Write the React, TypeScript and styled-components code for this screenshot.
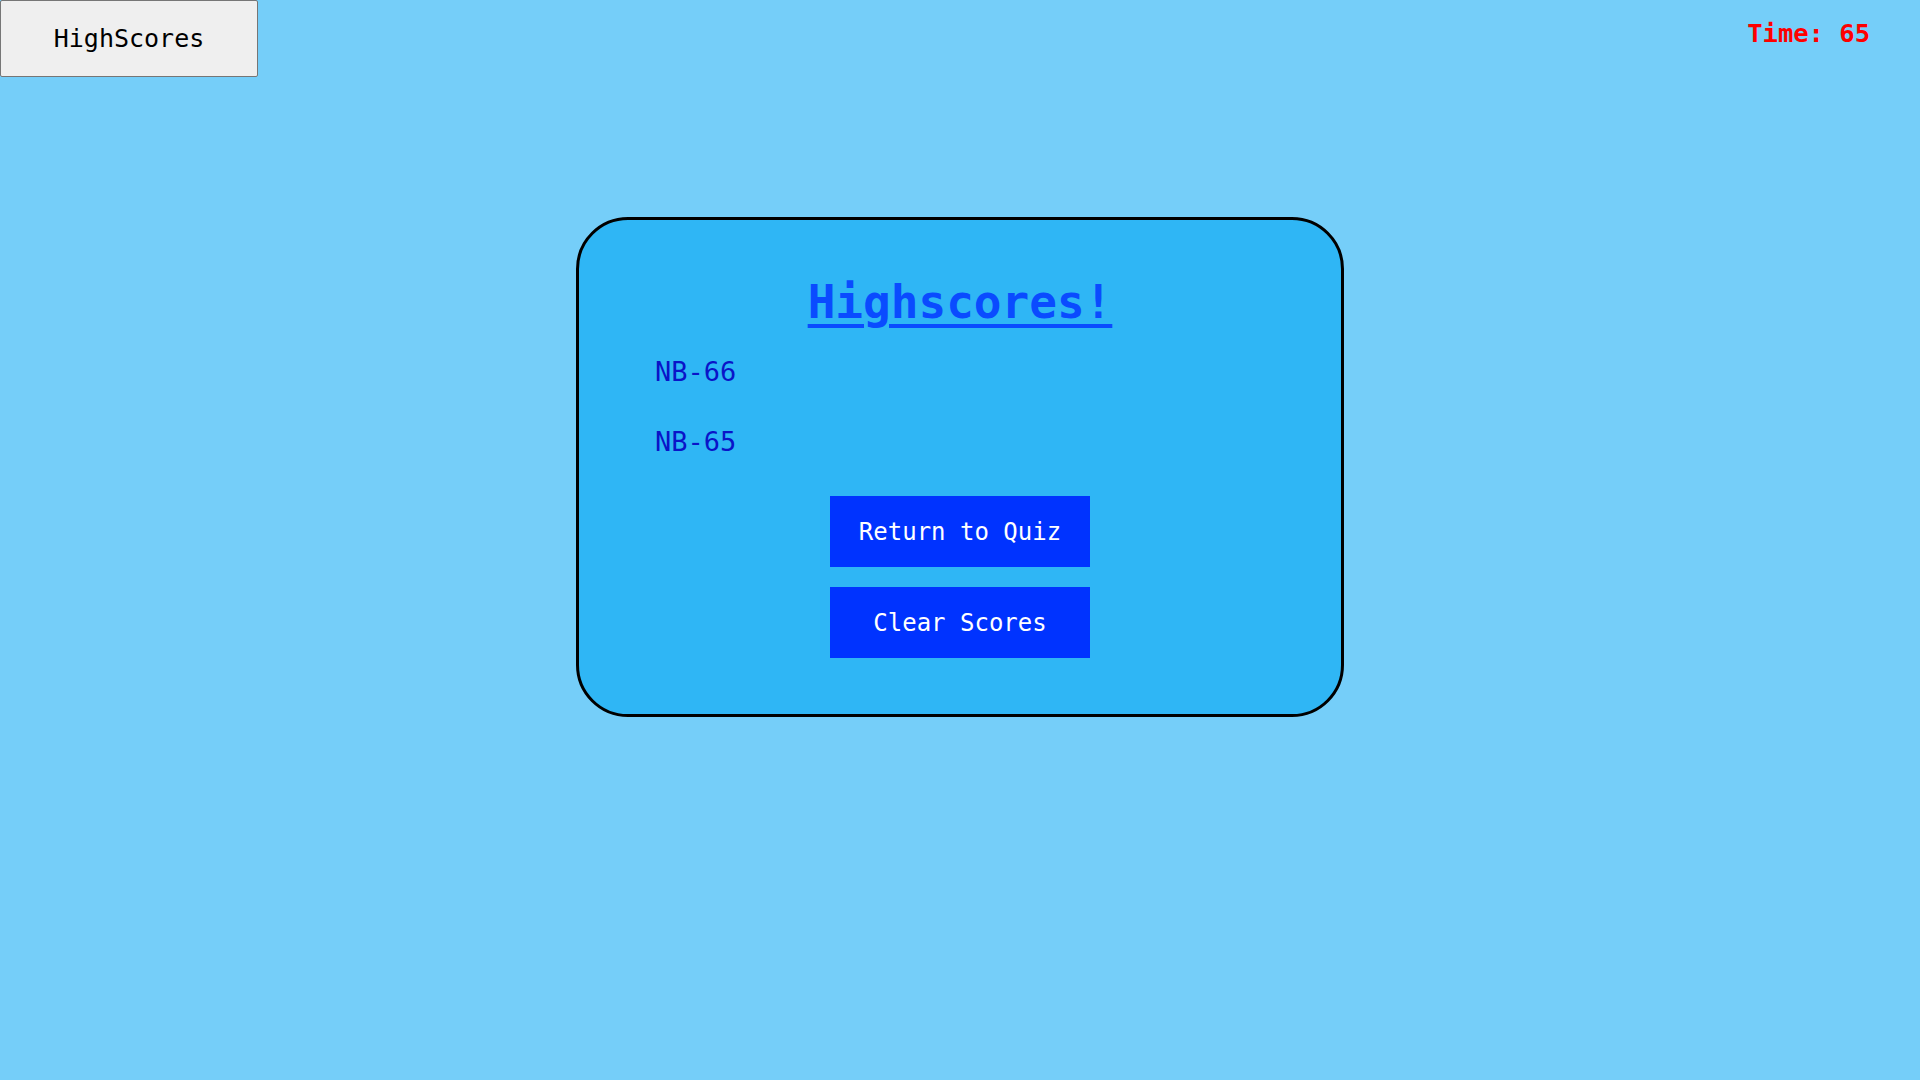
import React from "react";
import styled, { createGlobalStyle } from "styled-components";

const GlobalStyle = createGlobalStyle`
  html, body {
    margin: 0;
    padding: 0;
    background-color: #75cef9;
    font-family: "DejaVu Sans Mono", monospace;
  }
`;

const Page = styled.div`
  width: 1920px;
  min-height: 1080px;
  display: flex;
  flex-direction: column;
  align-items: center;
`;

const Header = styled.header`
  width: 100%;
  display: flex;
  justify-content: space-between;
  align-items: flex-start;
`;

const ScoresLink = styled.button`
  width: 258px;
  height: 77px;
  background-color: #efefef;
  border: 1px solid #767676;
  border-radius: 2px;
  font-family: "DejaVu Sans Mono", monospace;
  font-size: 25px;
  color: #000;
  cursor: pointer;
`;

const Timer = styled.div`
  margin: 19px 50px 0 0;
  color: #ff0000;
  font-weight: 700;
  font-size: 25.5px;
  line-height: 29px;
`;

const Card = styled.section`
  box-sizing: border-box;
  width: 768px;
  margin-top: 140px;
  padding: 55px 0 56px;
  background-color: #2fb6f5;
  border: 3px solid #000;
  border-radius: 52px;
  display: flex;
  flex-direction: column;
  align-items: center;
`;

const Title = styled.h1`
  margin: 0;
  font-size: 46px;
  line-height: 54px;
  font-weight: 700;
  color: #0a4bff;
  text-decoration: underline;
  text-decoration-thickness: 4px;
  text-underline-offset: 6px;
`;

const ScoreList = styled.ol`
  align-self: stretch;
  list-style: none;
  margin: 28px 0 0;
  padding: 0 0 0 76px;
  display: flex;
  flex-direction: column;
  gap: 40px;
`;

const ScoreItem = styled.li`
  font-size: 27px;
  line-height: 30px;
  color: #0a14c8;
`;

const Actions = styled.div`
  margin-top: 39px;
  display: flex;
  flex-direction: column;
  gap: 20px;
`;

const ActionButton = styled.button`
  width: 260px;
  height: 71px;
  border: none;
  background-color: #0033ff;
  color: #fff;
  font-family: "DejaVu Sans Mono", monospace;
  font-size: 24px;
  cursor: pointer;
`;

const scores = ["NB-66", "NB-65"];

export default function App() {
  return (
    <>
      <GlobalStyle />
      <Page>
        <Header>
          <ScoresLink>HighScores</ScoresLink>
          <Timer>Time: 65</Timer>
        </Header>
        <Card>
          <Title>Highscores!</Title>
          <ScoreList>
            {scores.map((s) => (
              <ScoreItem key={s}>{s}</ScoreItem>
            ))}
          </ScoreList>
          <Actions>
            <ActionButton>Return to Quiz</ActionButton>
            <ActionButton>Clear Scores</ActionButton>
          </Actions>
        </Card>
      </Page>
    </>
  );
}
